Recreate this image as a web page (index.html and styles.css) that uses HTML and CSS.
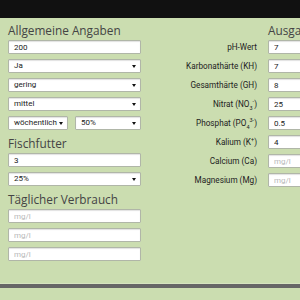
FILE: index.html
```html
<!DOCTYPE html>
<html lang="de">
<head>
<meta charset="utf-8">
<link rel="stylesheet" href="styles.css">
</head>
<body>
<div class="topbar"></div>
<main class="page">
  <section class="col left">
    <h2 class="heading">Allgemeine Angaben</h2>
    <div class="field"><input class="input" value="200"></div>
    <div class="field"><div class="select">Ja</div></div>
    <div class="field"><div class="select">gering</div></div>
    <div class="field"><div class="select">mittel</div></div>
    <div class="field pair">
      <div class="select">wöchentlich</div>
      <div class="select">50%</div>
    </div>
    <h2 class="heading">Fischfutter</h2>
    <div class="field"><input class="input" value="3"></div>
    <div class="field"><div class="select">25%</div></div>
    <h2 class="heading">Täglicher Verbrauch</h2>
    <div class="field"><input class="input" placeholder="mg/l"></div>
    <div class="field"><input class="input" placeholder="mg/l"></div>
    <div class="field"><input class="input" placeholder="mg/l"></div>
  </section>
  <section class="col right">
    <div class="grid">
      <span></span><h2 class="heading">Ausgangswerte</h2>
      <label class="label">pH-Wert</label><input class="input" value="7">
      <label class="label">Karbonathärte (KH)</label><input class="input" value="7">
      <label class="label">Gesamthärte (GH)</label><input class="input" value="8">
      <label class="label">Nitrat (NO<sub>3</sub><sup>-</sup>)</label><input class="input" value="25">
      <label class="label">Phosphat (PO<sub>4</sub><sup>3-</sup>)</label><input class="input" value="0.5">
      <label class="label">Kalium (K<sup>+</sup>)</label><input class="input" value="4">
      <label class="label">Calcium (Ca)</label><input class="input" placeholder="mg/l">
      <label class="label">Magnesium (Mg)</label><input class="input" placeholder="mg/l">
    </div>
  </section>
</main>
<footer class="footer"></footer>
</body>
</html>
```
FILE: styles.css
```css
html, body {
  margin: 0;
  padding: 0;
  overflow: hidden;
  background: #cbddb0;
  width: 300px;
  height: 300px;
}
body {
  font-family: Roboto, "Liberation Sans", sans-serif;
  color: #333;
}
.topbar {
  height: 18px;
  background: #111;
}
.page {
  display: flex;
  width: 420px;
  height: 265px;
}
.col {
  box-sizing: border-box;
}
.left {
  width: 150px;
  padding: 4px 9px 0 8px;
  flex: none;
}
.right {
  flex: none;
  width: 270px;
  padding-top: 4px;
  padding-left: 0;
}
.heading {
  font-family: "Open Sans", sans-serif;
  font-weight: 400;
  font-size: 11.8px;
  line-height: 16px;
  color: #444;
  margin: 0 0 2px;
  white-space: nowrap;
}
.field {
  margin-bottom: 5px;
}
.pair {
  display: grid;
  grid-template-columns: 60px 66px;
  column-gap: 7px;
}
.input, .select {
  box-sizing: border-box;
  display: block;
  width: 133px;
  height: 14px;
  margin: 0;
  padding: 0 5px;
  border: 1px solid #b0b6a8;
  border-radius: 1px;
  background: #fff;
  box-shadow: inset 0 1px 1px rgba(0,0,0,0.12);
  font-family: Roboto, "Liberation Sans", sans-serif;
  font-size: 8px;
  line-height: 12px;
  color: #222;
  outline: none;
}
.input::placeholder {
  color: #b8b8b8;
}
.select {
  position: relative;
  width: auto;
}
.pair .select {
  width: auto;
}
.select::after {
  content: "";
  position: absolute;
  right: 4px;
  top: 5px;
  border-left: 2px solid transparent;
  border-right: 2px solid transparent;
  border-top: 3px solid #111;
}
.grid {
  display: grid;
  grid-template-columns: 107px 133px;
  column-gap: 11px;
  row-gap: 5px;
  align-items: center;
}
.grid .heading {
  margin: 0 0 -3px;
}
.label {
  text-align: right;
  font-size: 8.2px;
  color: #222;
  white-space: nowrap;
}
.label sub, .label sup {
  font-size: 5.5px;
  line-height: 0;
}
.footer {
  height: 4px;
  background: #666;
  border-top: 1px solid #d6e4c0;
}
```
